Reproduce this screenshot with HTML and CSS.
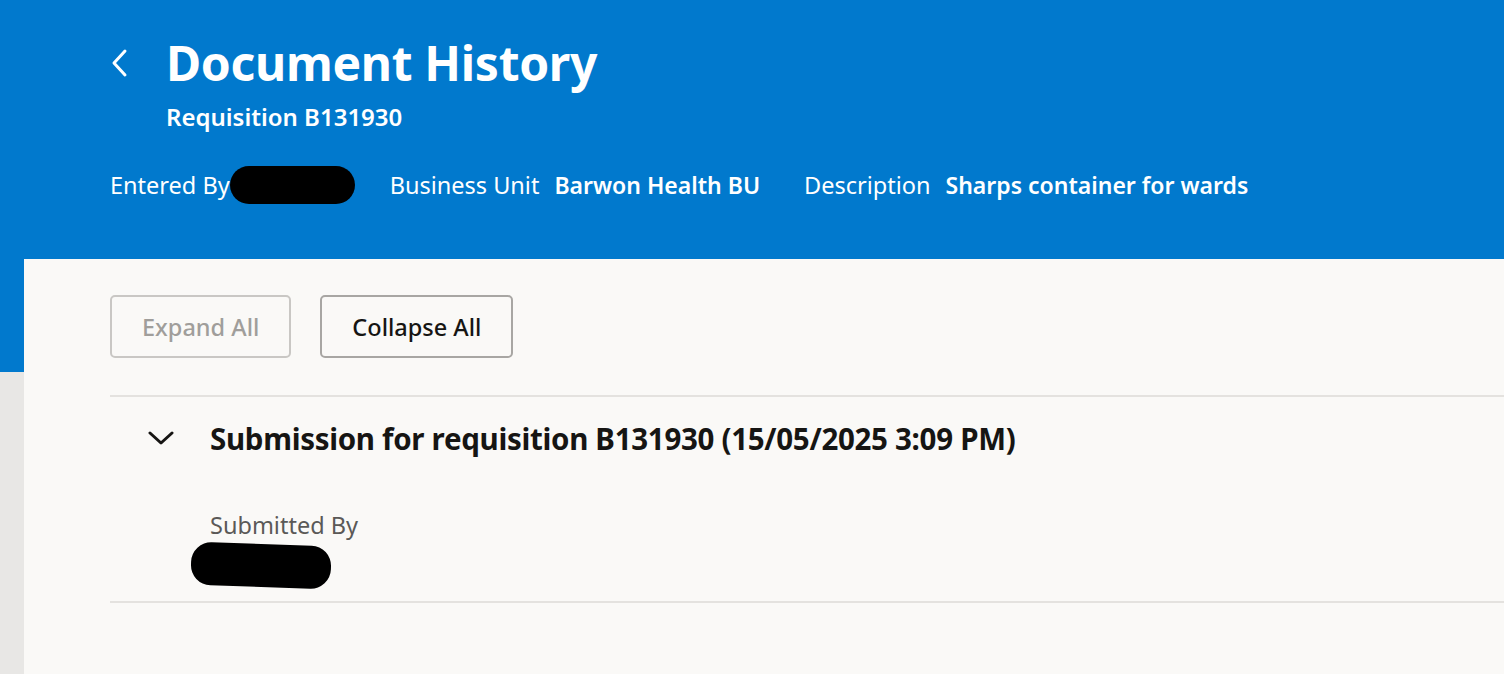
FILE: index.html
```html
<!DOCTYPE html>
<html lang="en">
<head>
<meta charset="utf-8">
<title>Document History</title>
<link rel="stylesheet" href="styles.css">
</head>
<body>
<header class="header">
  <div class="title-row">
    <button class="back" aria-label="Back">
      <svg width="20" height="30" viewBox="0 0 20 30"><path d="M15 3 L4 15 L15 27" fill="none" stroke="#fff" stroke-width="3" stroke-linecap="round" stroke-linejoin="round"/></svg>
    </button>
    <div class="titles">
      <h1 class="title">Document History</h1>
      <div class="subtitle">Requisition B131930</div>
    </div>
  </div>
  <div class="meta">
    <div class="meta-item"><span class="meta-label">Entered By</span><span class="redact redact-entered"></span></div>
    <div class="meta-item"><span class="meta-label">Business Unit</span><span class="meta-value">Barwon Health BU</span></div>
    <div class="meta-item"><span class="meta-label">Description</span><span class="meta-value">Sharps container for wards</span></div>
  </div>
</header>
<main class="card">
  <div class="toolbar">
    <button class="btn btn-disabled" disabled>Expand All</button>
    <button class="btn">Collapse All</button>
  </div>
  <section class="entry">
    <div class="entry-head">
      <svg class="chev" width="26" height="16" viewBox="0 0 26 16"><path d="M2 3 L13 13 L24 3" fill="none" stroke="#161513" stroke-width="3" stroke-linecap="round" stroke-linejoin="round"/></svg>
      <h2 class="entry-title">Submission for requisition B131930 (15/05/2025 3:09 PM)</h2>
    </div>
    <div class="entry-body">
      <div class="field-label">Submitted By</div>
      <span class="redact redact-submitted"></span>
    </div>
  </section>
</main>
</body>
</html>
```
FILE: styles.css
```css
html, body {
  margin: 0;
  padding: 0;
}
body {
  background: #e8e7e5;
  font-family: "Noto Sans", "Open Sans", sans-serif;
  color: #161513;
  height: 674px;
  overflow: hidden;
}
.header {
  background: #0179cd;
  height: 372px;
  box-sizing: border-box;
  padding: 31px 0 0 110px;
  color: #fff;
}
.title-row {
  display: flex;
  align-items: flex-start;
}
.back {
  background: none;
  border: 0;
  padding: 0;
  margin: 17px 36px 0 0;
  width: 20px;
  height: 30px;
  cursor: pointer;
}
.title {
  margin: 0;
  font-size: 48px;
  font-weight: 700;
  line-height: 64px;
  letter-spacing: -0.3px;
}
.subtitle {
  font-size: 24px;
  font-weight: 600;
  line-height: 30px;
  margin-top: 7px;
}
.meta {
  display: flex;
  align-items: center;
  margin-top: 34px;
  font-size: 23.5px;
  line-height: 30px;
}
.meta-item {
  display: flex;
  align-items: center;
  margin-right: 44px;
}
.meta-label {
  margin-right: 15px;
}
.meta-value {
  font-weight: 600;
  font-size: 23px;
}
.redact {
  display: inline-block;
  background: #000;
}
.redact-entered {
  width: 125px;
  height: 38px;
  border-radius: 19px;
  margin-left: -15px;
  margin-right: -9px;
}
.card {
  margin: -113px 0 0 24px;
  background: #faf9f7;
  height: 415px;
  padding: 36px 0 0 86px;
  box-sizing: border-box;
}
.toolbar {
  display: flex;
  gap: 29px;
  padding-bottom: 37px;
  border-bottom: 2px solid #e4e2df;
}
.btn {
  height: 63px;
  padding: 0 30px;
  font-family: inherit;
  font-size: 23.5px;
  font-weight: 500;
  color: #161513;
  background: transparent;
  border: 2px solid #a8a6a3;
  border-radius: 5px;
}
.btn-disabled {
  color: #a09e9b;
  border-color: #c9c7c4;
}
.entry {
  border-bottom: 2px solid #e4e2df;
  padding-bottom: 9px;
}
.entry-head {
  display: flex;
  align-items: center;
  height: 82px;
  padding-left: 38px;
}
.chev {
  margin-right: 36px;
}
.entry-title {
  margin: 0;
  font-size: 29.5px;
  font-weight: 700;
  letter-spacing: -0.3px;
}
.entry-body {
  padding: 30px 0 0 100px;
}
.field-label {
  font-size: 23.5px;
  color: #5b5957;
  line-height: 32px;
}
.redact-submitted {
  width: 140px;
  height: 43px;
  border-radius: 20px;
  margin-left: -19px;
  margin-top: 3px;
  transform: rotate(2deg);
}
```
